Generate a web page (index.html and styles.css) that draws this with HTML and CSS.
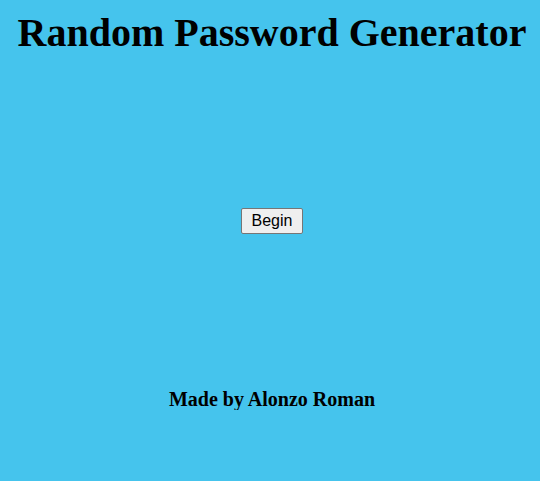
FILE: index.html
```html
<!DOCTYPE html>
<html>
<head>
<meta charset="utf-8">
<title>Random Password Generator</title>
<link rel="stylesheet" href="styles.css">
</head>
<body>
<div class="page">
  <h1 class="title">Random Password Generator</h1>
  <main class="main">
    <button class="begin" type="button">Begin</button>
  </main>
  <h3 class="credit">Made by Alonzo Roman</h3>
</div>
</body>
</html>
```
FILE: styles.css
```css
html, body {
  margin: 0;
  padding: 0;
  background: #45c4ed;
}
.page {
  display: flex;
  flex-direction: column;
  align-items: center;
  padding-left: 4px;
  font-family: "Liberation Serif", "Times New Roman", serif;
  color: #000;
}
.title {
  margin: 10px 0 0;
  font-size: 40px;
  font-weight: bold;
  line-height: 46px;
}
.main {
  margin-top: 152px;
  display: flex;
  justify-content: center;
}
.begin {
  font-family: "Liberation Sans", Arial, sans-serif;
  font-size: 16px;
  padding: 2px 10px;
  height: 26px;
  background: #efefef;
  border: 1px solid #767676;
  border-radius: 2px;
  color: #000;
}
.credit {
  margin: 154px 0 0;
  font-size: 20px;
  font-weight: bold;
  line-height: 22px;
}
```
